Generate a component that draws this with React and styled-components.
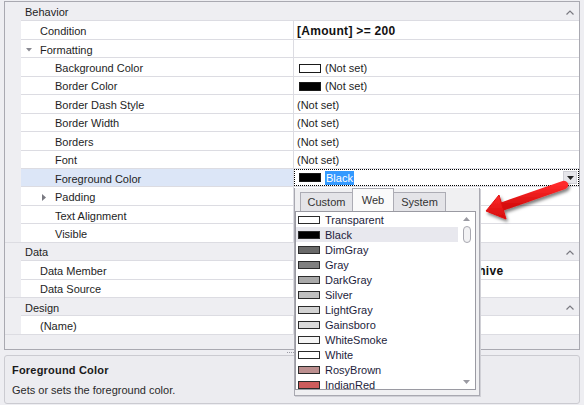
import styled, { createGlobalStyle } from "styled-components";

const GlobalStyle = createGlobalStyle`
  html, body {
    margin: 0;
    padding: 0;
    background: #eeeef2;
  }
  body {
    font-family: "Liberation Sans", Arial, sans-serif;
    font-size: 11px;
    color: #1e1e1e;
  }
`;

const ROW_H = "18.45px";
const LINE = "#dcdce2";

const Page = styled.div`
  position: relative;
  width: 584px;
  height: 405px;
  box-sizing: border-box;
  padding: 1px 4px 1px 4px;
  display: flex;
  flex-direction: column;
  overflow: hidden;
`;

const Grid = styled.div`
  height: 349px;
  flex: none;
  box-sizing: border-box;
  border: 1px solid #a9a9b1;
  background: #eeeef2;
  display: flex;
  flex-direction: column;
  overflow: hidden;
`;

const CategoryRow = styled.div`
  display: flex;
  align-items: center;
  flex: none;
  height: ${ROW_H};
  box-sizing: border-box;
  padding: 2px 5px 0 20px;
  border-top: ${(p) => (p.$first ? "none" : `1px solid ${LINE}`)};
`;

const CategoryLabel = styled.span`
  flex: 1;
`;

const PropRow = styled.div`
  display: flex;
  flex: none;
  height: ${ROW_H};
  box-sizing: border-box;
  margin-left: 16px;
  border-top: 1px solid ${LINE};
  background: #fff;
`;

const NameCell = styled.div`
  width: 273px;
  flex: none;
  box-sizing: border-box;
  display: flex;
  align-items: center;
  padding: 2px 0 0 ${(p) => p.$level * 15 - 11}px;
  border-right: 1px solid ${LINE};
  background: ${(p) => (p.$selected ? "#dce6f7" : "transparent")};
`;

const Expander = styled.span`
  width: 15px;
  flex: none;
  display: flex;
  align-items: center;
  padding-left: ${(p) => (p.$open ? 1 : 2)}px;
  box-sizing: border-box;
`;

const ValueCell = styled.div`
  flex: 1;
  min-width: 0;
  display: flex;
  align-items: center;
  padding: ${(p) => (p.$editing ? 0 : 2)}px 0 0 3px;
  white-space: nowrap;
  overflow: hidden;
  outline: ${(p) => (p.$editing ? "1px dotted #000" : "none")};
  outline-offset: -1px;
`;

const BoldValue = styled.span`
  font-weight: bold;
  font-size: 12px;
  letter-spacing: 0.3px;
  color: #111;
`;

const Swatch = styled.span`
  width: 22px;
  height: 9px;
  flex: none;
  box-sizing: border-box;
  border: 1px solid #1a1a1a;
  background: ${(p) => p.$color};
  margin: 0 4px 0 2px;
`;

const Highlight = styled.span`
  background: #3399ff;
  color: #fff;
  padding: 1px 1px;
`;

const EditorButton = styled.span`
  margin-left: auto;
  margin-right: 2px;
  width: 14px;
  height: 13px;
  flex: none;
  box-sizing: border-box;
  background: #e6e6ea;
  border: 1px solid #d0d0d6;
  display: flex;
  align-items: center;
  justify-content: center;
`;

const Filler = styled.div`
  flex: 1;
  border-top: 1px solid ${LINE};
`;

const Splitter = styled.div`
  height: 5px;
  flex: none;
  display: flex;
  align-items: center;
  justify-content: center;
`;

const Grip = styled.span`
  width: 7px;
  height: 1px;
  margin-left: -4px;
  background: repeating-linear-gradient(
    90deg,
    #9a9aa4 0 1px,
    transparent 1px 2px
  );
`;

const Description = styled.div`
  height: 49px;
  flex: none;
  box-sizing: border-box;
  border: 1px solid #cbcbd1;
  border-radius: 3px;
  background: #ececf0;
  padding: 8px 7px;
`;

const DescTitle = styled.div`
  font-weight: bold;
  letter-spacing: 0.2px;
  line-height: 13px;
  color: #1a1a1a;
`;

const DescText = styled.div`
  margin-top: 7px;
  line-height: 13px;
  color: #2a2a2a;
`;

/* colour drop-down */
const Popup = styled.div`
  position: absolute;
  left: 294px;
  top: 188px;
  width: 186px;
  height: 208px;
  box-sizing: border-box;
  border: 1px solid #a9a9b1;
  border-top: none;
  background: #f0f0f2;
  display: flex;
  flex-direction: column;
  padding: 0 3px 5px 0;
  box-shadow: 1px 1px 0 #d0d0d6;
`;

const TabStrip = styled.div`
  height: 23px;
  flex: none;
  display: flex;
  align-items: flex-end;
  padding-left: 5px;
`;

const Tab = styled.div`
  width: ${(p) => p.$width}px;
  height: ${(p) => (p.$active ? 23 : 19)}px;
  box-sizing: border-box;
  margin-left: ${(p) => (p.$first ? 0 : -1)}px;
  border: 1px solid #acacb4;
  border-bottom: none;
  background: ${(p) => (p.$active ? "#fafafa" : "#e4e4e8")};
  display: flex;
  align-items: center;
  justify-content: center;
  font-size: 11px;
  color: #333;
  position: relative;
  z-index: ${(p) => (p.$active ? 2 : 1)};
`;

const ListBox = styled.div`
  flex: 1;
  display: flex;
  border: 1px solid #9a9aa2;
  background: #fff;
  overflow: hidden;
`;

const Items = styled.div`
  flex: 1;
  min-width: 0;
`;

const Item = styled.div`
  height: 15px;
  display: flex;
  align-items: center;
  padding-left: 2px;
  background: ${(p) => (p.$hover ? "#e8e8ee" : "transparent")};
  color: #1d1d3c;
  white-space: nowrap;
`;

const ItemSwatch = styled.span`
  width: 22px;
  height: 8px;
  flex: none;
  box-sizing: border-box;
  border: 1px solid #2b2b2b;
  background: ${(p) => p.$color};
  margin-right: 5px;
`;

const Scrollbar = styled.div`
  width: 17px;
  flex: none;
  display: flex;
  flex-direction: column;
  align-items: center;
  padding: 5px 0 5px;
`;

const Thumb = styled.div`
  width: 8px;
  height: 17px;
  margin-top: 5px;
  box-sizing: border-box;
  border: 1px solid #a8a8b0;
  border-radius: 4px;
  background: #f2f2f4;
`;

const ScrollSpacer = styled.div`
  flex: 1;
`;

const ArrowLayer = styled.svg`
  position: absolute;
  left: 478px;
  top: 168px;
  overflow: visible;
`;

const Caret = () => (
  <svg width="8" height="5" viewBox="0 0 8 5">
    <path d="M0.5 4.5 L4 1 L7.5 4.5" fill="none" stroke="#7a7a82" strokeWidth="1.2" />
  </svg>
);

const OpenGlyph = () => (
  <svg width="6" height="4" viewBox="0 0 6 4">
    <path d="M0 0 H6 L3 3.5 Z" fill="#8a8a92" />
  </svg>
);

const ClosedGlyph = () => (
  <svg width="4" height="7" viewBox="0 0 4 7">
    <path d="M0 0 L4 3.5 L0 7 Z" fill="#7a7a82" />
  </svg>
);

const DownTri = ({ color = "#222" }) => (
  <svg width="7" height="4" viewBox="0 0 7 4">
    <path d="M0 0 H7 L3.5 4 Z" fill={color} />
  </svg>
);

const UpTri = () => (
  <svg width="7" height="4" viewBox="0 0 7 4">
    <path d="M0 4 H7 L3.5 0 Z" fill="#9a9aa2" />
  </svg>
);

const rows = [
  { cat: "Behavior" },
  { label: "Condition", level: 1, bold: "[Amount] >= 200" },
  { label: "Formatting", level: 1, expander: "open" },
  { label: "Background Color", level: 2, swatch: "#fff", value: "(Not set)" },
  { label: "Border Color", level: 2, swatch: "#000", value: "(Not set)" },
  { label: "Border Dash Style", level: 2, value: "(Not set)" },
  { label: "Border Width", level: 2, value: "(Not set)" },
  { label: "Borders", level: 2, value: "(Not set)" },
  { label: "Font", level: 2, value: "(Not set)" },
  { label: "Foreground Color", level: 2, swatch: "#000", value: "Black", editing: true },
  { label: "Padding", level: 2, expander: "closed" },
  { label: "Text Alignment", level: 2 },
  { label: "Visible", level: 2 },
  { cat: "Data" },
  { label: "Data Member", level: 1, bold: "Orders.OrdersByCustomerArchive" },
  { label: "Data Source", level: 1 },
  { cat: "Design" },
  { label: "(Name)", level: 1 },
];

const colors = [
  ["Transparent", "#ffffff"],
  ["Black", "#000000"],
  ["DimGray", "#696969"],
  ["Gray", "#808080"],
  ["DarkGray", "#a9a9a9"],
  ["Silver", "#c0c0c0"],
  ["LightGray", "#d3d3d3"],
  ["Gainsboro", "#dcdcdc"],
  ["WhiteSmoke", "#f5f5f5"],
  ["White", "#ffffff"],
  ["RosyBrown", "#bc8f8f"],
  ["IndianRed", "#cd5c5c"],
];

function PropertyRow({ row }) {
  return (
    <PropRow>
      <NameCell $level={row.level} $selected={row.editing}>
        <Expander $open={row.expander === "open"}>
          {row.expander === "open" && <OpenGlyph />}
          {row.expander === "closed" && <ClosedGlyph />}
        </Expander>
        {row.label}
      </NameCell>
      <ValueCell $editing={row.editing}>
        {row.swatch && <Swatch $color={row.swatch} />}
        {row.bold && <BoldValue>{row.bold}</BoldValue>}
        {row.value && (row.editing ? <Highlight>{row.value}</Highlight> : row.value)}
        {row.editing && (
          <EditorButton>
            <DownTri />
          </EditorButton>
        )}
      </ValueCell>
    </PropRow>
  );
}

function ColorPopup() {
  return (
    <Popup>
      <TabStrip>
        <Tab $first $width={53}>Custom</Tab>
        <Tab $active $width={42}>Web</Tab>
        <Tab $width={53}>System</Tab>
      </TabStrip>
      <ListBox>
        <Items>
          {colors.map(([name, c]) => (
            <Item key={name} $hover={name === "Black"}>
              <ItemSwatch $color={c} />
              {name}
            </Item>
          ))}
        </Items>
        <Scrollbar>
          <UpTri />
          <Thumb />
          <ScrollSpacer />
          <DownTri color="#9a9aa2" />
        </Scrollbar>
      </ListBox>
    </Popup>
  );
}

function RedArrow() {
  return (
    <ArrowLayer width="100" height="60" viewBox="0 0 100 60">
      <defs>
        <linearGradient id="redGrad" x1="0" y1="0" x2="0" y2="1">
          <stop offset="0" stopColor="#ff2a2a" />
          <stop offset="1" stopColor="#d40c0c" />
        </linearGradient>
        <filter id="shadow" x="-20%" y="-20%" width="140%" height="160%">
          <feDropShadow dx="1.5" dy="2.5" stdDeviation="1.4" floodColor="#000" floodOpacity="0.5" />
        </filter>
      </defs>
      <g filter="url(#shadow)">
        <path d="M23 39 L86 17" stroke="url(#redGrad)" strokeWidth="8.5" strokeLinecap="round" />
        <path d="M8 43 L21 27 L28 51 Z" fill="url(#redGrad)" stroke="#e01010" strokeWidth="1" strokeLinejoin="round" />
      </g>
    </ArrowLayer>
  );
}

export default function App() {
  return (
    <>
      <GlobalStyle />
      <Page>
        <Grid>
          {rows.map((row, i) =>
            row.cat ? (
              <CategoryRow key={row.cat} $first={i === 0}>
                <CategoryLabel>{row.cat}</CategoryLabel>
                <Caret />
              </CategoryRow>
            ) : (
              <PropertyRow key={row.label} row={row} />
            )
          )}
          <Filler />
        </Grid>
        <Splitter>
          <Grip />
        </Splitter>
        <Description>
          <DescTitle>Foreground Color</DescTitle>
          <DescText>Gets or sets the foreground color.</DescText>
        </Description>
        <ColorPopup />
        <RedArrow />
      </Page>
    </>
  );
}
